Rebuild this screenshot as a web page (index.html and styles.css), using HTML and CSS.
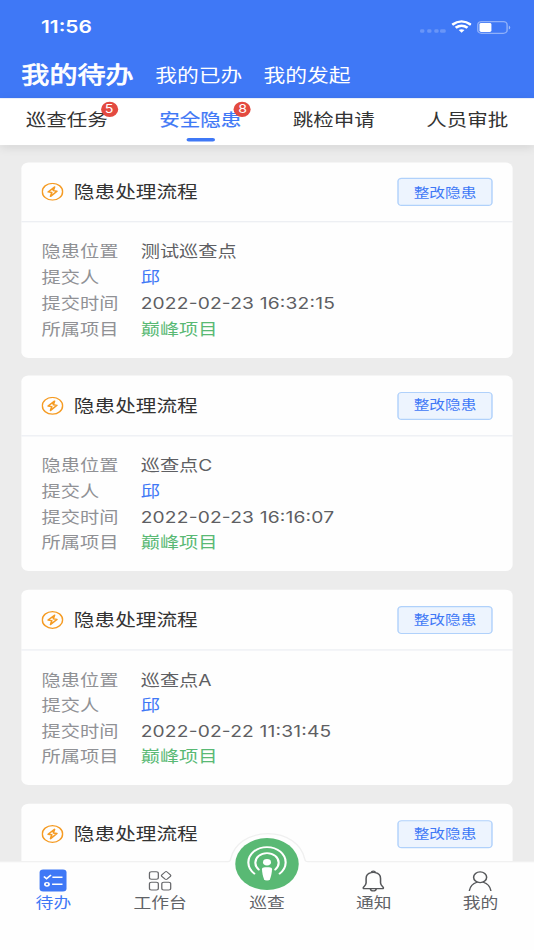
FILE: index.html
```
<!DOCTYPE html>
<html lang="zh-CN">
<head>
<meta charset="utf-8">
<title>我的待办</title>
<link rel="stylesheet" href="styles.css">
</head>
<body>
<svg class="sprite" width="0" height="0">
  <symbol id="bolt" viewBox="0 0 16 16">
    <circle cx="8" cy="8" r="7.300" fill="none" stroke="currentColor" stroke-width="1.100"/>
    <path d="M9.500 3.900 4.900 8.200 7.500 8.700 6.600 12.100 11.200 7.600 8.600 7.100Z" fill="none" stroke="currentColor" stroke-width="1.200" stroke-linejoin="round"/>
  </symbol>
</svg>
<div class="screen">
  <header class="header">
    <div class="status">
      <span class="time">11:56</span>
      <div class="status-icons">
        <div class="dots"><i></i><i></i><i></i><i></i></div>
        <svg class="wifi" viewBox="0 0 14 11"><g fill="none" stroke="#fff" stroke-width="2"><path d="M.5 4.100Q7-1.600 13.500 4.100"/><path d="M2.900 6.600Q7 3.200 11.100 6.600"/></g><path d="M5 8.600Q7 7.100 9 8.600L7 10.800Z" fill="#fff"/></svg>
        <svg class="battery" viewBox="0 0 24 11"><rect x=".5" y=".5" width="20.600" height="10" rx="2.600" fill="none" stroke="#fff" stroke-opacity=".42"/><rect x="1.700" y="1.700" width="8.400" height="7.600" rx="1.200" fill="#fff"/><path d="M22.300 3.700Q24.400 5.500 22.300 7.300Z" fill="#fff" fill-opacity=".5"/></svg>
      </div>
    </div>
    <nav class="nav">
      <span class="nav-active">我的待办</span>
      <span class="nav-item second">我的已办</span>
      <span class="nav-item">我的发起</span>
    </nav>
  </header>

  <nav class="tabs">
    <div class="tab">巡查任务<span class="badge">5</span></div>
    <div class="tab tab-active">安全隐患<span class="badge">8</span></div>
    <div class="tab">跳检申请</div>
    <div class="tab">人员审批</div>
  </nav>

  <main class="list">
    <article class="card">
      <div class="card-head"><svg class="bolt"><use href="#bolt"/></svg><h2>隐患处理流程</h2><button>整改隐患</button></div>
      <dl>
        <dt>隐患位置</dt><dd>测试巡查点</dd>
        <dt>提交人</dt><dd class="person">邱</dd>
        <dt>提交时间</dt><dd class="date">2022-02-23 16:32:15</dd>
        <dt>所属项目</dt><dd class="project">巅峰项目</dd>
      </dl>
    </article>
    <article class="card">
      <div class="card-head"><svg class="bolt"><use href="#bolt"/></svg><h2>隐患处理流程</h2><button>整改隐患</button></div>
      <dl>
        <dt>隐患位置</dt><dd>巡查点C</dd>
        <dt>提交人</dt><dd class="person">邱</dd>
        <dt>提交时间</dt><dd class="date">2022-02-23 16:16:07</dd>
        <dt>所属项目</dt><dd class="project">巅峰项目</dd>
      </dl>
    </article>
    <article class="card">
      <div class="card-head"><svg class="bolt"><use href="#bolt"/></svg><h2>隐患处理流程</h2><button>整改隐患</button></div>
      <dl>
        <dt>隐患位置</dt><dd>巡查点A</dd>
        <dt>提交人</dt><dd class="person">邱</dd>
        <dt>提交时间</dt><dd class="date">2022-02-22 11:31:45</dd>
        <dt>所属项目</dt><dd class="project">巅峰项目</dd>
      </dl>
    </article>
    <article class="card">
      <div class="card-head"><svg class="bolt"><use href="#bolt"/></svg><h2>隐患处理流程</h2><button>整改隐患</button></div>
    </article>
  </main>

  <footer class="bar">
    <svg class="hump" viewBox="0 0 60 30"><path d="M0 24.500H2Q3.600 24.500 4 22.200C6.200 9.500 16.500.6 30 .6S53.800 9.500 56 22.200Q56.400 24.500 58 24.500H60V30H0Z" fill="#fefefe"/><path d="M0 24.500H2Q3.600 24.500 4 22.200C6.200 9.500 16.500.6 30 .6S53.800 9.500 56 22.200Q56.400 24.500 58 24.500H60" fill="none" stroke="#f0f0f0"/></svg>
    <div class="item item-active">
      <svg class="icon" viewBox="0 0 20 20"><rect x="-.2" y=".3" width="19.400" height="19.200" rx="2.600" fill="#3f78f6"/><g fill="none" stroke="#fff" stroke-width="1.300"><path d="M2.900 6.300 4.800 8.300 8 5M9 6.900H16.300M8.800 13.200H16.300"/><circle cx="5.100" cy="13.200" r="1.500"/></g></svg>
      <span>待办</span>
    </div>
    <div class="item">
      <svg class="icon" viewBox="0 0 20 20"><g fill="none" stroke="#66676a" stroke-width=".9"><rect x="2" y="2.200" width="6.400" height="6.600" rx="1.500"/><rect x="2" y="11.300" width="6.400" height="6.800" rx="1.500"/><rect x="10.900" y="11.300" width="6.400" height="6.800" rx="1.500"/><path d="M13.300 2.400Q14 1.700 14.700 2.400L17.100 4.900Q17.700 5.600 17.100 6.300L14.700 8.700Q14 9.300 13.300 8.700L10.900 6.300Q10.300 5.600 10.900 4.900Z"/></g></svg>
      <span>工作台</span>
    </div>
    <div class="item">
      <svg class="patrol" viewBox="0 0 45 45"><circle cx="22.500" cy="22.500" r="22.300" fill="#59b974"/><g fill="none" stroke="#fff" stroke-width="1.500" stroke-linecap="round"><path d="M13.600 30.700A13.100 13.100 0 1 1 31.400 30.700"/><path d="M16.700 27.200A8.200 8.200 0 1 1 28.300 27.200"/></g><ellipse cx="22.500" cy="21" rx="2.800" ry="2.700" fill="#fff"/><path d="M19 27Q19 25.300 21 25.300H24Q26 25.300 26 27C26 30 25.300 33 24.600 35.500Q24.200 36.600 22.500 36.600T20.400 35.500C19.700 33 19 30 19 27Z" fill="#fff"/></svg>
      <span>巡查</span>
    </div>
    <div class="item">
      <svg class="icon" viewBox="0 0 20 20"><g fill="none" stroke="#55575a" stroke-width="1.100" stroke-linejoin="round"><path d="M7.900 3Q8.100 1.600 9.400 1.600T10.900 3C13.200 3.600 14.600 5.400 14.600 8.100V12.100C14.600 13.800 15.600 14.900 16.600 16Q16.900 16.900 16 16.900H2.800Q1.900 16.900 2.200 16C3.200 14.900 4.200 13.800 4.200 12.100V8.100C4.200 5.400 5.600 3.600 7.900 3"/><path d="M7.300 17.100Q7.600 19 9.400 19T11.500 17.100M7.900 3Q9.400 2.600 10.900 3"/></g></svg>
      <span>通知</span>
    </div>
    <div class="item">
      <svg class="icon" viewBox="0 0 20 20"><g fill="none" stroke="#55575a" stroke-width="1.100" stroke-linecap="round"><circle cx="9.400" cy="7" r="4.700"/><path d="M1.700 18.600C2.300 14.800 4.400 12.400 7.100 11.400M17.100 18.600C16.500 14.800 14.400 12.400 11.700 11.400"/></g></svg>
      <span>我的</span>
    </div>
  </footer>
</div>
</body>
</html>
```
FILE: styles.css
```
* { box-sizing: border-box; }

html, body {
  margin: 0;
  width: 534px;
  height: 950px;
  overflow: hidden;
}

.sprite { position: absolute; }

/* 375x812 artboard stretched to the viewport */
.screen {
  width: 375px;
  height: 812px;
  transform: scale(1.424, 1.16995);
  transform-origin: 0 0;
  display: flex;
  flex-direction: column;
  overflow: hidden;
  background: #ececec;
  color: #333;
  font-family: Inter, "Noto Sans CJK SC", sans-serif;
}

.header {
  flex: none;
  height: 83.500px;
  background: #3f78f6;
  color: #fff;
}

.status {
  height: 46px;
  padding: 0 15.700px 0 28.800px;
  display: flex;
  align-items: center;
  justify-content: space-between;
}

.time {
  font-size: 14.700px;
  font-weight: 600;
}

.status-icons { display: flex; align-items: center; }
.dots { display: flex; gap: 1.500px; margin: 7px 4.200px 0 0; }
.dots i { width: 3.200px; height: 3.200px; border-radius: 1px; background: rgba(255,255,255,.22); }
.wifi { width: 14.300px; height: 11.200px; margin-right: 4.300px; }
.battery { width: 24px; height: 11px; }

.nav {
  height: 37.400px;
  padding-left: 15px;
  display: flex;
  align-items: center;
  line-height: 1;
  white-space: nowrap;
}

.nav-active {
  width: 94px;
  font-size: 19.700px;
  font-weight: 400;
  -webkit-text-stroke: .65px #fff;
}
.nav-item { font-size: 15.300px; font-weight: 400; }
.second { width: 76px; }

.tabs {
  position: relative;
  z-index: 1;
  flex: none;
  height: 40px;
  background: #fff;
  display: grid;
  grid-template-columns: repeat(4, 1fr);
  box-shadow: 0 2px 8px rgba(0,0,0,.12);
}

.tab {
  position: relative;
  padding-top: 11.400px;
  text-align: center;
  font-size: 14.400px;
  line-height: 16px;
}

.tab-active { color: #3f78f6; -webkit-text-stroke: .2px #3f78f6; }

.tab-active::after {
  content: "";
  position: absolute;
  left: 50%;
  bottom: 2.800px;
  width: 20px;
  height: 2.600px;
  margin-left: -10px;
  border-radius: 2px;
  background: #3f78f6;
}

.badge {
  position: absolute;
  left: 70.700px;
  top: 3.400px;
  width: 12px;
  height: 12.800px;
  border-radius: 50%;
  background: #e34a40;
  color: #fff;
  font-size: 10px;
  font-weight: 400;
  line-height: 12.800px;
  -webkit-text-stroke: 0;
}

.list {
  flex: 1;
  min-height: 0;
  overflow: hidden;
  padding: 15.100px 15.400px 0 15.400px;
}

.card {
  height: 167px;
  margin-bottom: 15.900px;
  border-radius: 5px;
  background: #fefefe;
}

.card-head {
  height: 51.900px;
  border-bottom: 1px solid #ebedf2;
  padding: 0 13.600px;
  display: flex;
  align-items: center;
}

.bolt { width: 15.700px; height: 15.700px; color: #f59b23; }

.card h2 {
  margin: 0 auto 0 7.200px;
  font-size: 14.500px;
  font-weight: 400;
  line-height: 20px;
}

.card button {
  width: 67px;
  height: 24px;
  padding: 0;
  border: 1px solid #b0d1fb;
  border-radius: 3px;
  background: #edf4fe;
  color: #3f78f6;
  font: 400 11px/21px Inter, "Noto Sans CJK SC", sans-serif;
}

dl {
  margin: 0;
  padding: 15px 13.800px 0;
  display: grid;
  grid-template-columns: 69.600px 1fr;
  grid-auto-rows: 21.700px;
  font-size: 13.500px;
  line-height: 21.700px;
}

dt { color: #909195; }
dd { margin: 0; color: #5e5f63; white-space: nowrap; }
.date { font-feature-settings: "case"; letter-spacing: .12px; }
.person { color: #3f78f6; }
.project { color: #59b974; }

.bar {
  position: relative;
  z-index: 2;
  flex: none;
  height: 76.200px;
  background: #fefefe;
  border-top: 1px solid #f0f0f0;
  display: grid;
  grid-template-columns: repeat(5, 1fr);
}

.hump {
  position: absolute;
  left: 157.500px;
  top: -25px;
  width: 60px;
  height: 30px;
}

.item {
  position: relative;
  display: flex;
  flex-direction: column;
  align-items: center;
  justify-content: flex-start;
  padding-top: 6.500px;
  color: #606266;
  font-size: 12.500px;
  line-height: 18px;
}

.item-active { color: #3f78f6; }
.icon { width: 19.500px; height: 19.500px; margin-bottom: .6px; overflow: visible; }
.patrol { width: 45px; height: 45px; flex: none; margin: -27.300px 0 2.400px; }
```
